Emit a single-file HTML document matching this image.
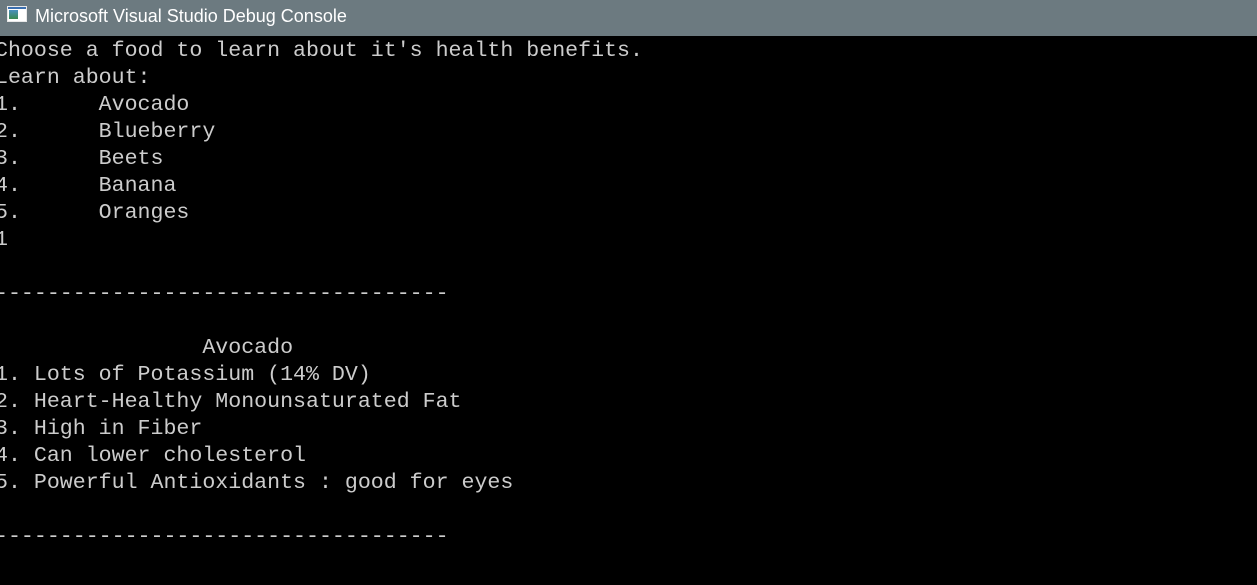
<html><head><style>
body{margin:0;width:1257px;height:585px;background:#000;overflow:hidden;position:relative}
#t{position:absolute;left:0;top:0;width:1257px;height:36px;background:#6c7a80;color:#fff;font:18px "Liberation Sans",sans-serif}
#t span{position:absolute;left:35px;top:6px}
#ic{position:absolute;left:7px;top:6px;width:18px;height:14px;border:1px solid #e8e8e8;background:#fff}
#ic:before{content:"";position:absolute;left:1px;top:3px;width:9px;height:9px;background:linear-gradient(#4a90c0,#3a8a50)}
#ic:after{content:"";position:absolute;left:0;top:0;width:18px;height:2px;background:#3a6fb0}
pre{position:absolute;left:-5px;top:38px;margin:0;color:#cccccc;font:21.6px/27px "Liberation Mono",monospace}
</style></head><body>
<div id="t"><div id="ic"></div><span>Microsoft Visual Studio Debug Console</span></div>
<pre>Choose a food to learn about it's health benefits.
Learn about:
1.      Avocado
2.      Blueberry
3.      Beets
4.      Banana
5.      Oranges
1

-----------------------------------

                Avocado
1. Lots of Potassium (14% DV)
2. Heart-Healthy Monounsaturated Fat
3. High in Fiber
4. Can lower cholesterol
5. Powerful Antioxidants : good for eyes

-----------------------------------</pre>
</body></html>
